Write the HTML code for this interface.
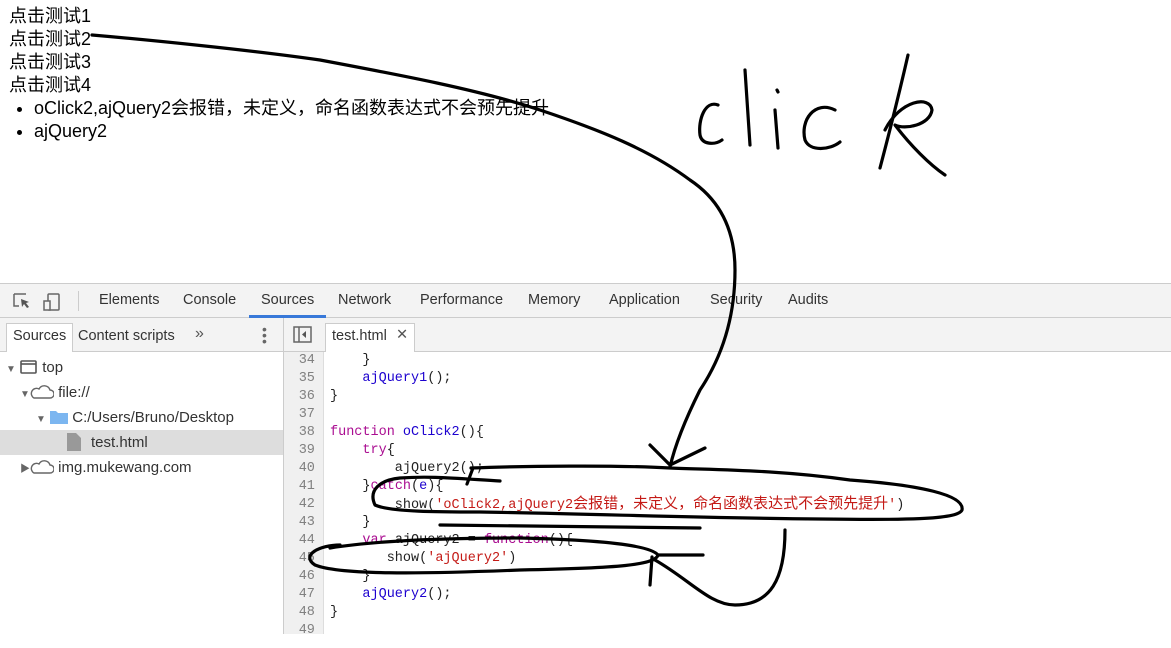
<!DOCTYPE html>
<html><head><meta charset="utf-8"><style>
body{margin:0;width:1171px;height:648px;overflow:hidden;background:#fff;font-family:"Liberation Sans","Noto Sans CJK SC",sans-serif;position:relative}
.top{position:absolute;left:9px;top:5px;font-size:18px;line-height:23px;color:#000}
.top ul{margin:0;padding-left:25px}
.dt{position:absolute;left:0;top:283px;width:1171px;height:350px;border-top:1px solid #ccc;font-size:14.5px;color:#333}
.tb{position:absolute;left:0;top:0;width:1171px;height:33px;background:#f3f3f3;border-bottom:1px solid #ccc}
.tb span{position:absolute;top:8px;color:#333}
.sb{position:absolute;left:0;top:34px;width:283px;height:33px;background:#f3f3f3;border-bottom:1px solid #ccc;border-right:1px solid #ccc}
.ed{position:absolute;left:284px;top:34px;width:887px;height:33px;background:#f3f3f3;border-bottom:1px solid #ccc}
.tree{position:absolute;left:0;top:68px;width:283px;height:282px;border-right:1px solid #ccc;font-size:15px}
.tree div{position:absolute;height:25px;line-height:25px;white-space:nowrap}
.gut{position:absolute;left:284px;top:68px;width:39px;height:282px;background:#f0f0f0;border-right:1px solid #ddd;font-family:"Liberation Mono",monospace;font-size:13.5px;color:#808080;text-align:right}
.code{position:absolute;left:330px;top:68px;font-family:"Liberation Mono","Noto Sans CJK SC",monospace;font-size:13.5px;color:#222;white-space:pre}
.l{height:18px;line-height:18px}
.k{color:#aa0d91}.f{color:#1c00cf}.s{color:#c41a16}
.cj{font-size:15px}
</style></head><body>
<div class="top">点击测试1<br>点击测试2<br>点击测试3<br>点击测试4
<ul><li>oClick2,ajQuery2会报错，未定义，命名函数表达式不会预先提升</li><li>ajQuery2</li></ul></div>
<div class="dt">
<div class="tb">
<svg style="position:absolute;left:12px;top:8px" width="56" height="20"><path d="M2 2h12M2 2v12h5" stroke="#666" fill="none" stroke-width="1.5"/><path d="M9 7l8 3-3 1 3 4-2 1-3-4-2 3z" fill="#555"/><rect x="36" y="2" width="11" height="16" rx="1" stroke="#666" fill="none" stroke-width="1.5"/><rect x="32" y="9" width="6" height="9" stroke="#666" fill="#f3f3f3" stroke-width="1.5"/></svg>
<div style="position:absolute;left:78px;top:7px;width:1px;height:20px;background:#ccc"></div>
<span style="left:99px">Elements</span><span style="left:183px">Console</span><span style="left:261px">Sources</span><span style="left:338px">Network</span><span style="left:420px">Performance</span><span style="left:528px">Memory</span><span style="left:609px">Application</span><span style="left:710px">Security</span><span style="left:788px">Audits</span>
<div style="position:absolute;left:249px;top:31px;width:77px;height:3px;background:#3879d9"></div>
</div>
<div class="sb"><div style="position:absolute;left:6px;top:5px;width:65px;height:28px;background:#fff;border:1px solid #ccc;border-bottom:none"></div>
<span style="position:absolute;left:13px;top:10px">Sources</span><span style="position:absolute;left:78px;top:10px">Content scripts</span><span style="position:absolute;left:195px;top:7px;font-size:16px;color:#555">»</span>
<span style="position:absolute;left:262px;top:8px;width:4px;font-size:14px;line-height:6px;color:#666">•<br>•<br>•</span></div>
<div class="ed"><svg style="position:absolute;left:9px;top:8px" width="20" height="18"><rect x="1" y="1" width="17" height="15" fill="none" stroke="#666" stroke-width="1.5"/><line x1="6" y1="1" x2="6" y2="16" stroke="#666" stroke-width="1.5"/><path d="M13 5v7l-4-3.5z" fill="#555"/></svg>
<div style="position:absolute;left:41px;top:5px;width:88px;height:28px;background:#fff;border:1px solid #ccc;border-bottom:none"></div>
<span style="position:absolute;left:48px;top:10px">test.html</span><span style="position:absolute;left:112px;top:9px;color:#555">✕</span></div>
<div class="tree">
<div style="left:6px;top:3px"><span style="font-size:10px;color:#666">▼</span> <svg width="18" height="14" style="vertical-align:-2px"><rect x="1" y="1" width="15" height="12" rx="1" fill="none" stroke="#555" stroke-width="1.6"/><line x1="1" y1="4" x2="16" y2="4" stroke="#555" stroke-width="1.6"/></svg> top</div>
<div style="left:20px;top:28px"><span style="font-size:10px;color:#666">▼</span><svg width="24" height="14" style="vertical-align:-2px"><path d="M4 13h16a4 4 0 0 0 0-8 6 6 0 0 0-11-1 4.5 4.5 0 0 0-5 9z" fill="none" stroke="#666" stroke-width="1.4"/></svg> file://</div>
<div style="left:36px;top:53px"><span style="font-size:10px;color:#666">▼</span> <svg width="18" height="14" style="vertical-align:-2px"><path d="M0 1h6l2 2h10v11H0z" fill="#7cb6f0"/></svg> C:/Users/Bruno/Desktop</div>
<div style="left:0;top:78px;width:283px;background:#ddd"><svg width="14" height="18" style="position:absolute;left:67px;top:3px"><path d="M0 0h9l5 5v13H0z" fill="#999"/></svg><span style="position:absolute;left:91px">test.html</span></div>
<div style="left:20px;top:103px"><span style="font-size:10px;color:#666">▶</span><svg width="24" height="14" style="vertical-align:-2px"><path d="M4 13h16a4 4 0 0 0 0-8 6 6 0 0 0-11-1 4.5 4.5 0 0 0-5 9z" fill="none" stroke="#666" stroke-width="1.4"/></svg> img.mukewang.com</div>
</div>
<div class="gut"><div class="l">34&nbsp;</div><div class="l">35&nbsp;</div><div class="l">36&nbsp;</div><div class="l">37&nbsp;</div><div class="l">38&nbsp;</div><div class="l">39&nbsp;</div><div class="l">40&nbsp;</div><div class="l">41&nbsp;</div><div class="l">42&nbsp;</div><div class="l">43&nbsp;</div><div class="l">44&nbsp;</div><div class="l">45&nbsp;</div><div class="l">46&nbsp;</div><div class="l">47&nbsp;</div><div class="l">48&nbsp;</div><div class="l">49&nbsp;</div></div>
<div class="code"><div class="l">    }</div><div class="l">    <span class="f">ajQuery1</span>();</div><div class="l">}</div><div class="l"> </div><div class="l"><span class="k">function</span> <span class="f">oClick2</span>(){</div><div class="l">    <span class="k">try</span>{</div><div class="l">        ajQuery2();</div><div class="l">    }<span class="k">catch</span>(<span class="f">e</span>){</div><div class="l">        show(<span class="s">'oClick2,ajQuery2<span class="cj">会报错，未定义，命名函数表达式不会预先提升</span>'</span>)</div><div class="l">    }</div><div class="l">    <span class="k">var</span> ajQuery2 = <span class="k">function</span>(){</div><div class="l">       show(<span class="s">'ajQuery2'</span>)</div><div class="l">    }</div><div class="l">    <span class="f">ajQuery2</span>();</div><div class="l">}</div></div>
</div>
<svg style="position:absolute;left:0;top:0" width="1171" height="648" fill="none" stroke="#000" stroke-width="3.2" stroke-linecap="round" stroke-linejoin="round">
<path d="M92 35C150 40 250 50 320 60C400 75 480 90 540 110C600 130 650 150 690 180C720 200 735 230 735 270C735 320 720 360 700 390C685 420 675 445 670 467"/>
<path d="M650 445L670 465L705 448"/>
<path d="M718 105C705 100 698 120 700 135C702 145 715 145 722 140"/>
<path d="M745 70L750 145"/>
<path d="M775 110L778 148M777 90L778 92"/>
<path d="M835 110C815 100 800 120 805 140C810 152 830 150 840 142"/>
<path d="M908 55C900 90 890 130 880 168"/>
<path d="M885 130C900 100 930 95 932 110C930 125 905 130 895 125C910 145 930 165 945 175"/>
<path d="M471 468C520 466 620 465 670 468C720 470 780 470 850 480C920 485 965 495 962 510C958 520 900 520 820 519C700 518 600 514 480 512C440 512 390 512 375 505C368 490 380 480 400 478C430 476 450 478 500 481"/>
<path d="M467 484L473 468"/>
<path d="M440 525C520 526 600 527 700 528"/>
<path d="M330 548C380 540 450 538 520 538C600 540 650 545 658 555C655 565 620 568 520 570C420 574 340 575 315 565C300 555 320 545 340 545"/>
<path d="M658 555L703 555"/>
<path d="M652 557L650 585"/>
<path d="M655 560C690 580 710 605 735 605C770 605 785 580 785 530"/>
</svg>
</body></html>
